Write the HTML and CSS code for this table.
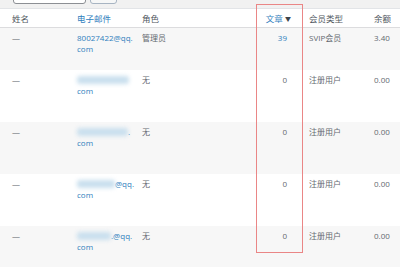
FILE: index.html
```html
<!DOCTYPE html>
<html lang="zh-CN">
<head>
<meta charset="utf-8">
<link rel="stylesheet" href="styles.css">
</head>
<body>
<div class="page">
  <div class="toolbar">
    <div class="search-input"></div>
    <div class="search-btn"></div>
  </div>
  <div class="table">
    <div class="row head">
      <div class="c name">姓名</div>
      <div class="c email link">电子邮件</div>
      <div class="c role">角色</div>
      <div class="c posts link">文章 <span class="arrow">▼</span></div>
      <div class="c type">会员类型</div>
      <div class="c bal">余额</div>
    </div>
    <div class="row alt first">
      <div class="c name">—</div>
      <div class="c email link"><span class="ln">80027422@qq.</span><span class="ln">com</span></div>
      <div class="c role">管理员</div>
      <div class="c posts num link">39</div>
      <div class="c type">SVIP会员</div>
      <div class="c bal">3.40</div>
    </div>
    <div class="row">
      <div class="c name">—</div>
      <div class="c email link"><span class="ln"><span class="blur w52"></span></span><span class="ln">com</span></div>
      <div class="c role">无</div>
      <div class="c posts num">0</div>
      <div class="c type">注册用户</div>
      <div class="c bal">0.00</div>
    </div>
    <div class="row alt">
      <div class="c name">—</div>
      <div class="c email link"><span class="ln"><span class="blur w50"></span>.</span><span class="ln">com</span></div>
      <div class="c role">无</div>
      <div class="c posts num">0</div>
      <div class="c type">注册用户</div>
      <div class="c bal">0.00</div>
    </div>
    <div class="row">
      <div class="c name">—</div>
      <div class="c email link"><span class="ln"><span class="blur w41"></span>@qq.</span><span class="ln">com</span></div>
      <div class="c role">无</div>
      <div class="c posts num">0</div>
      <div class="c type">注册用户</div>
      <div class="c bal">0.00</div>
    </div>
    <div class="row alt">
      <div class="c name">—</div>
      <div class="c email link"><span class="ln"><span class="blur w34"></span>.@qq.</span><span class="ln">com</span></div>
      <div class="c role">无</div>
      <div class="c posts num">0</div>
      <div class="c type">注册用户</div>
      <div class="c bal">0.00</div>
    </div>
  </div>
  <div class="highlight"></div>
</div>
</body>
</html>
```

FILE: styles.css
```css
html, body {
  margin: 0;
  padding: 0;
}
body {
  background: #f1f1f1;
  font-family: "Open Sans", "Noto Sans CJK SC", sans-serif;
  font-size: 8px;
  color: #646970;
  width: 400px;
  height: 267px;
  overflow: hidden;
}
.page {
  position: relative;
  width: 400px;
  height: 267px;
}
.toolbar {
  height: 8px;
  display: flex;
  gap: 4px;
  padding-left: 13px;
  align-items: flex-end;
  padding-bottom: 4px;
  box-sizing: border-box;
}
.search-input {
  width: 71px;
  height: 16px;
  background: #fff;
  border: 1px solid #8c8f94;
  border-radius: 3px;
  flex: none;
}
.search-btn {
  width: 25px;
  height: 16px;
  background: #f6f7f7;
  border: 1px solid #a7b4c2;
  border-radius: 3px;
  flex: none;
}
.table {
  background: #fff;
  border-top: 1px solid #e2e4e7;
}
.row {
  display: grid;
  grid-template-columns: 69px 65px 122px 45px 65px 1fr;
  height: 52px;
  box-sizing: border-box;
  padding-top: 4px;
  line-height: 11px;
  background: #fff;
}
.row.alt {
  background: #f7f7f7;
}
.row.first {
  height: 42px;
}
.row.head {
  height: 19px;
  padding-top: 4px;
  border-bottom: 1px solid #dcdcde;
  color: #50575e;
  font-size: 8.5px;
}
.c {
  padding-left: 8px;
  white-space: nowrap;
}
.c.name {
  padding-left: 12px;
}
.c.posts {
  padding-left: 0;
  padding-right: 14px;
  text-align: right;
}
.row.head .c.posts {
  padding-right: 10px;
}
.arrow {
  font-size: 6px;
  color: #3c434a;
  vertical-align: 1px;
}
.link {
  color: #2f7ebd;
}
.row .c.num.link {
  color: #2f7ebd;
}
.ln {
  display: flex;
  align-items: center;
  height: 11px;
}
.blur {
  display: inline-block;
  height: 8px;
  background: #c9dfee;
  filter: blur(2px);
  border-radius: 3px;
}
.w52 { width: 52px; }
.w50 { width: 51px; }
.w41 { width: 41px; }
.w34 { width: 34px; }
.highlight {
  position: absolute;
  left: 256px;
  top: 4px;
  width: 47px;
  height: 249px;
  box-sizing: border-box;
  border: 1px solid #ea8686;
  pointer-events: none;
}
```
